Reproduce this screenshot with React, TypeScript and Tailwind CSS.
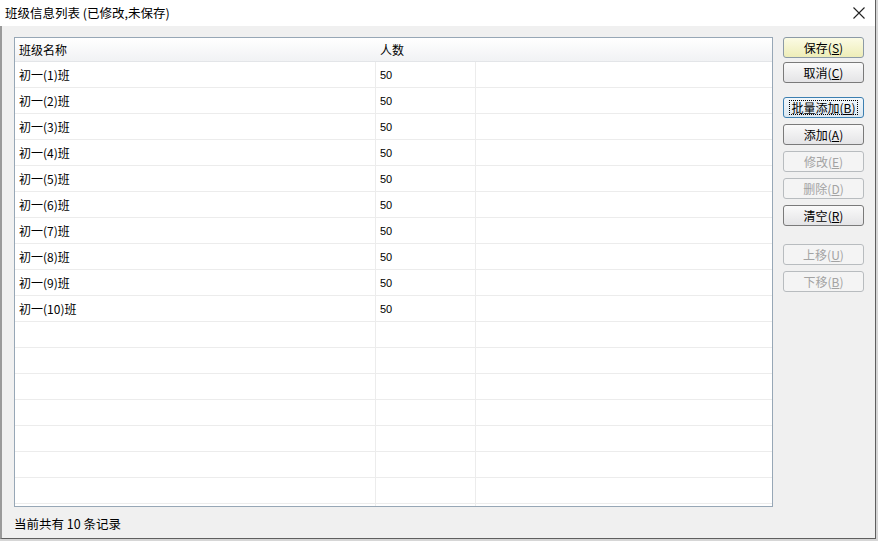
import React from 'react'

const font = { fontFamily: '"Noto Sans CJK SC", "Liberation Sans", sans-serif' }

const classes = Array.from({ length: 10 }, (_, i) => ({ name: `初一(${i + 1})班`, count: 50 }))

type BtnProps = {
  label: string
  hotkey: string
  disabled?: boolean
  primary?: boolean
  focused?: boolean
}

function DlgButton({ label, hotkey, disabled, primary, focused }: BtnProps) {
  const base = 'h-[21px] w-[81px] rounded-[3px] border text-[12px] leading-none flex items-center justify-center'
  let tone = 'border-[#7a7a7a] bg-gradient-to-b from-[#fafafa] to-[#e4e4e6] text-black'
  if (primary) tone = 'border-[#8c9aa6] bg-gradient-to-b from-[#fbfbe4] to-[#eeedb8] text-black'
  if (focused) tone = 'border-[#3c7fb1] bg-gradient-to-b from-[#f2f7fb] to-[#dce8f1] text-black'
  if (disabled) tone = 'border-[#b8bcbf] bg-[#f4f4f4] text-[#a3a3a3]'
  return (
    <button className={`${base} ${tone}`} style={font}>
      <span className={focused ? 'px-[2px] outline outline-1 outline-dotted outline-black -outline-offset-1 leading-[15px]' : ''}>
        {label}(<span className="underline">{hotkey}</span>)
      </span>
    </button>
  )
}

export default function App() {
  const emptyRows = 8
  return (
    <div className="w-[878px] h-[541px] bg-[#d6d6d6] overflow-hidden" style={font}>
      <div className="w-[876px] h-[539px] flex flex-col bg-[#f0f0f0] border-l-[2px] border-l-[#9a9a9a] border-r border-r-[#5f5f5f] border-b border-b-[#5f5f5f]">
        {/* title bar */}
        <div className="h-[26px] shrink-0 bg-white flex items-center justify-between pl-[5px] pr-[9px] -ml-[2px]">
          <span className="text-[12.5px] text-black">班级信息列表 (已修改,未保存)</span>
          <svg width="12" height="12" viewBox="0 0 12 12" className="mr-[1px]">
            <path d="M0.5 0.5 L11.5 11.5 M11.5 0.5 L0.5 11.5" stroke="#222" strokeWidth="1.1" />
          </svg>
        </div>

        <div className="flex flex-1 pt-[11px] pl-[12px]">
          <div className="flex flex-col">
            {/* class list */}
            <div className="w-[759px] h-[470px] border border-[#97a7b6] bg-white overflow-hidden">
              <div className="h-[24px] flex items-center text-[12px] bg-gradient-to-b from-white to-[#f1f2f4] border-b border-[#e3e5e8]">
                <div className="w-[361px] pl-[4px]">班级名称</div>
                <div className="w-[100px] pl-[4px]">人数</div>
              </div>
              {classes.map((c) => (
                <div key={c.name} className="h-[26px] flex items-center border-b border-[#ececec] text-[12px]">
                  <div className="w-[361px] h-full flex items-center pl-[4px] border-r border-[#ececec]">{c.name}</div>
                  <div className="w-[100px] h-full flex items-center pt-[2px] pl-[4px] border-r border-[#ececec] text-[11px]" style={{ fontFamily: '"Liberation Sans", sans-serif' }}>
                    {c.count}
                  </div>
                </div>
              ))}
              {Array.from({ length: emptyRows }, (_, i) => (
                <div key={i} className="h-[26px] flex border-b border-[#ececec]">
                  <div className="w-[361px] border-r border-[#ececec]" />
                  <div className="w-[100px] border-r border-[#ececec]" />
                </div>
              ))}
            </div>
            <div className="mt-[8px] text-[12.5px] text-black">当前共有 10 条记录</div>
          </div>

          {/* action buttons */}
          <div className="ml-[10px] flex flex-col">
            <DlgButton label="保存" hotkey="S" primary />
            <div className="mt-[4px]"><DlgButton label="取消" hotkey="C" /></div>
            <div className="mt-[14px]"><DlgButton label="批量添加" hotkey="B" focused /></div>
            <div className="mt-[6px]"><DlgButton label="添加" hotkey="A" /></div>
            <div className="mt-[6px]"><DlgButton label="修改" hotkey="E" disabled /></div>
            <div className="mt-[6px]"><DlgButton label="删除" hotkey="D" disabled /></div>
            <div className="mt-[6px]"><DlgButton label="清空" hotkey="R" /></div>
            <div className="mt-[18px]"><DlgButton label="上移" hotkey="U" disabled /></div>
            <div className="mt-[6px]"><DlgButton label="下移" hotkey="B" disabled /></div>
          </div>
        </div>
      </div>
    </div>
  )
}
